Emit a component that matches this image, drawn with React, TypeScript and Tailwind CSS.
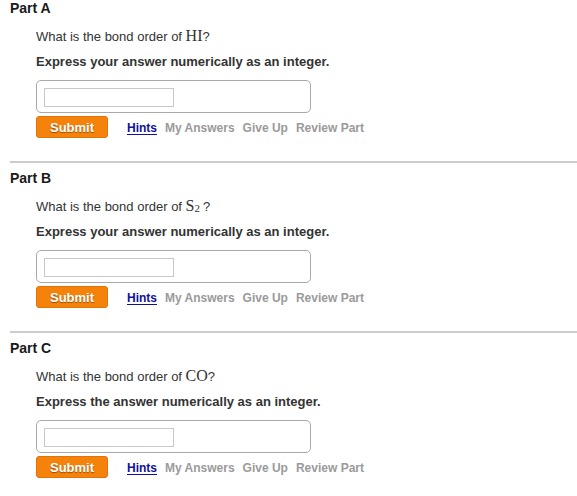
import React from 'react';

type Part = {
  label: string;
  formula: React.ReactNode;
  instruction: string;
};

const parts: Part[] = [
  {
    label: 'Part A',
    formula: <span className="font-['Liberation_Serif',serif] text-[16px] leading-none">HI</span>,
    instruction: 'Express your answer numerically as an integer.',
  },
  {
    label: 'Part B',
    formula: (
      <span className="font-['Liberation_Serif',serif] text-[16px] leading-none">
        S<sub className="text-[11px] leading-none relative top-[1px]">2</sub>
        <span className="inline-block w-[3px]" />
      </span>
    ),
    instruction: 'Express your answer numerically as an integer.',
  },
  {
    label: 'Part C',
    formula: <span className="font-['Liberation_Serif',serif] text-[16px] leading-none">CO</span>,
    instruction: 'Express the answer numerically as an integer.',
  },
];

const QuestionPart: React.FC<{ part: Part; last: boolean }> = ({ part, last }) => (
  <section className={last ? '' : 'pb-[23px]'}>
    <h2 className="pl-[10px] text-[14px] leading-[16px] font-bold text-[#1a1a1a]">{part.label}</h2>
    <div className="pl-[36px]">
      <p className="mt-[12px] h-[16px] text-[13px] leading-[16px] text-[#333] whitespace-nowrap">
        What is the bond order of {part.formula}?
      </p>
      <p className="mt-[10px] text-[13px] leading-[16px] font-bold text-[#333]">{part.instruction}</p>
      <div className="mt-[10px] w-[275px] h-[33px] rounded-[5px] border border-[#a9a9a9] pl-[7px] pt-[7px]">
        <div className="w-[130px] h-[19px] border border-[#c8c8c8] bg-white" />
      </div>
      <div className="mt-[3px] flex items-center">
        <button className="w-[72px] h-[22px] rounded-[3px] bg-[#f5830b] border border-[#e0740a] text-white text-[13px] font-bold [text-shadow:0_1px_1px_rgba(90,40,0,0.6)] leading-none">
          Submit
        </button>
        <div className="ml-[19px] flex items-center gap-[8px] text-[12px] font-bold leading-none pt-[2px]">
          <a className="text-[#10109a] underline underline-offset-[2px]">Hints</a>
          <span className="text-[#9a9a9a]">My Answers</span>
          <span className="text-[#9a9a9a]">Give Up</span>
          <span className="text-[#9a9a9a]">Review Part</span>
        </div>
      </div>
    </div>
  </section>
);

export default function App() {
  return (
    <div className="w-[577px] h-[496px] bg-white font-['Liberation_Sans',Arial,sans-serif] overflow-hidden">
      {parts.map((part, i) => (
        <React.Fragment key={part.label}>
          {i > 0 && <div className="ml-[10px] h-[2px] bg-[#cccccc] mb-[7px]" />}
          <QuestionPart part={part} last={i === parts.length - 1} />
        </React.Fragment>
      ))}
    </div>
  );
}
